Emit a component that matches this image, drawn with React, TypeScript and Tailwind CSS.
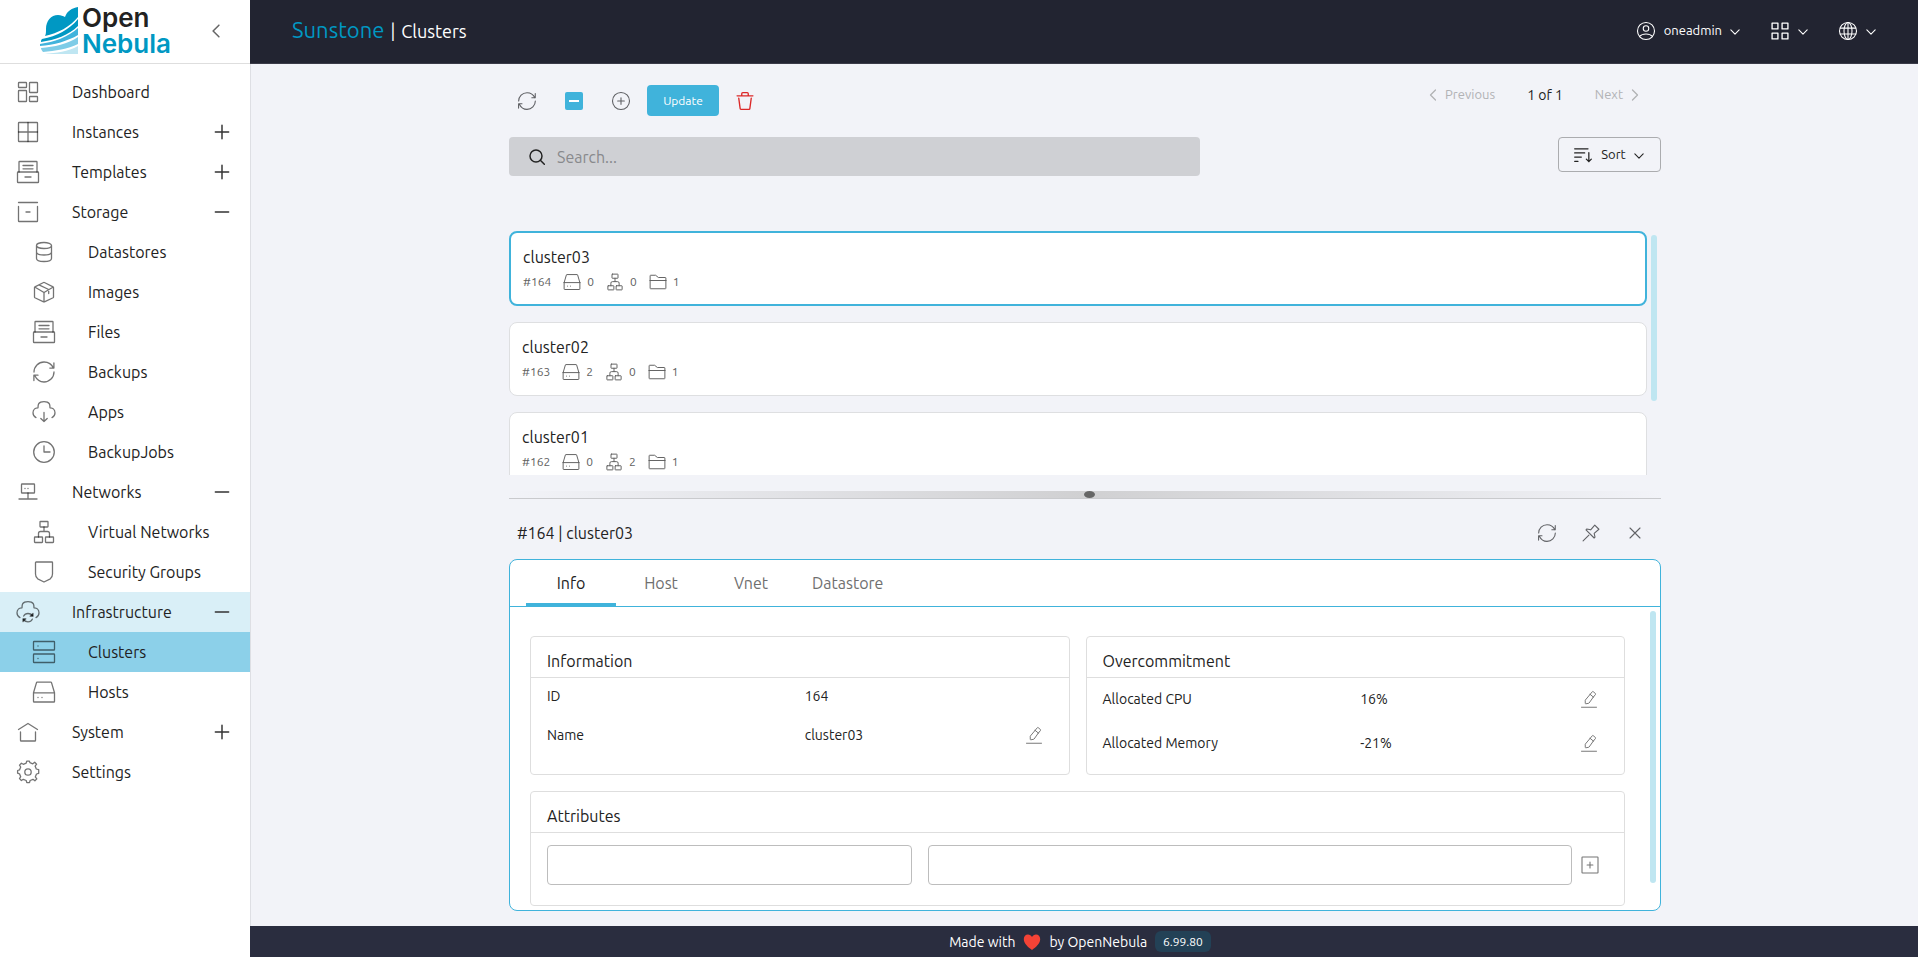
import type { ReactNode } from "react";

type IconProps = { children: ReactNode; className?: string };

function Icon({ children, className = "size-6" }: IconProps) {
    return (
        <svg
            viewBox="0 0 24 24"
            fill="none"
            stroke="currentColor"
            strokeWidth="1.3"
            strokeLinecap="round"
            strokeLinejoin="round"
            aria-hidden="true"
            className={`shrink-0 ${className}`}
        >
            {children}
        </svg>
    );
}

const paths = {
    dashboard: (
        <>
            <rect x="2.5" y="2.5" width="8" height="5" rx="0.6" />
            <rect x="2.5" y="10.5" width="8" height="11" rx="0.6" />
            <rect x="13.5" y="2.5" width="8" height="10" rx="0.6" />
            <rect x="13.5" y="16.5" width="8" height="5" rx="0.6" />
        </>
    ),
    grid: (
        <>
            <rect x="2.5" y="2.5" width="19" height="19" rx="0.6" />
            <path d="M12 2.5v19M2.5 12h19" />
        </>
    ),
    archive: (
        <>
            <path d="M3 12V2.1a.6.6 0 0 1 .6-.6h16.8a.6.6 0 0 1 .6.6V12" />
            <path d="M2.1 12h19.8a.6.6 0 0 1 .6.6v9.3a.6.6 0 0 1-.6.6H2.1a.6.6 0 0 1-.6-.6v-9.3a.6.6 0 0 1 .6-.6ZM7 5.5h10M7 8.8h10M9 17h6" />
        </>
    ),
    storage: (
        <path d="M2.5 6.5v14.4a.6.6 0 0 0 .6.6h17.8a.6.6 0 0 0 .6-.6V6.5M2.5 2.5h19M10 12h4" />
    ),
    database: (
        <path d="M4.5 5.5v13c0 1.7 3.4 3 7.5 3s7.5-1.3 7.5-3v-13M4.5 12c0 1.7 3.4 3 7.5 3s7.5-1.3 7.5-3M12 8.5c4.1 0 7.5-1.3 7.5-3s-3.4-3-7.5-3-7.5 1.3-7.5 3 3.4 3 7.5 3Z" />
    ),
    box: (
        <path d="m2.7 7 8.9 5.3c.3.15.55.15.85 0L21.3 7M12 21.5v-9.2M2.5 17.1V7.4c0-.3.15-.5.4-.6l8.7-4.3c.25-.1.5-.1.75 0l8.75 4.3c.25.1.4.3.4.6v9.7c0 .3-.15.5-.4.65l-8.7 4.1c-.25.1-.55.1-.8 0l-8.7-4.1c-.25-.15-.4-.35-.4-.65ZM7 4.8l9.7 4.7v4" />
    ),
    refresh: (
        <path d="M22 12c0 5.52-4.48 10-10 10-4 0-7.4-2.6-9.15-6.2M2 12C2 6.48 6.48 2 12 2c4.2 0 7.9 2.6 9.4 6.2M17.8 8.1h4.1V3M1.9 20.5v-5.3H6" />
    ),
    cloudDown: (
        <path d="M12 12.5v9m0 0 3.2-3M12 21.5l-3.2-3M20 17.6c1.5-.65 3-2.1 3-4.8 0-4-3.3-5-5-5C18 5 18 1.6 12 1.6S6 5 6 7.8c-1.7 0-5 1-5 5 0 2.7 1.5 4.15 3 4.8" />
    ),
    clock: (
        <>
            <circle cx="12" cy="12" r="10.3" />
            <path d="M12 6v6h6" />
        </>
    ),
    network: (
        <>
            <rect x="5.5" y="4" width="13" height="9" rx="0.6" />
            <path d="M12 13v6M3 19h18M9 8.5h.01M12 8.5h.01" />
        </>
    ),
    tree: (
        <>
            <rect x="8" y="1.5" width="8" height="5.5" rx="0.5" />
            <rect x="2.5" y="17" width="8" height="5.5" rx="0.5" />
            <rect x="13.5" y="17" width="8" height="5.5" rx="0.5" />
            <path d="M12 7v4.5M6.5 17v-3.5a2 2 0 0 1 2-2h7a2 2 0 0 1 2 2V17" />
        </>
    ),
    shield: (
        <path d="M3.5 14V2.6a.6.6 0 0 1 .6-.6h15.8a.6.6 0 0 1 .6.6V14c0 1.9-.7 3.7-2.2 4.8L12 22l-6.3-3.2C4.2 17.7 3.5 15.9 3.5 14Z" />
    ),
    cloudSync: (
        <>
            <path d="M20 17.6c1.5-.65 3-2.1 3-4.8 0-4-3.3-5-5-5C18 5 18 1.6 12 1.6S6 5 6 7.8c-1.7 0-5 1-5 5 0 2.7 1.5 4.15 3 4.8" />
            <path d="M16.5 15.5c-.9-1-2.3-2-4.5-2-2 0-3.6 1.1-4.3 2.6M7.5 19.8c.9 1 2.3 2 4.5 2 2 0 3.6-1.1 4.3-2.6" />
            <path d="M17 13.5v2.7h-2.8ZM7 21.5v-2.7h2.8Z" fill="currentColor" />
        </>
    ),
    servers: (
        <>
            <rect x="1.5" y="1.5" width="21" height="8.5" rx="0.6" />
            <rect x="1.5" y="14" width="21" height="8.5" rx="0.6" />
            <path d="M6 6h.01M6 18.5h.01" />
        </>
    ),
    drive: (
        <path d="M1.5 12.8v8.6c0 .3.25.6.6.6h19.8c.3 0 .6-.3.6-.6v-8.6M1.5 12.8l3-10.2c.05-.3.3-.5.6-.5h13.8c.3 0 .5.2.6.5l3 10.2M1.5 12.8h21M6 17.5h.01M10 17.5h.01" />
    ),
    house: <path d="m2.5 9.5 9.5-6 9.5 6M4.5 12v8.4a.6.6 0 0 0 .6.6h13.8a.6.6 0 0 0 .6-.6V12" />,
    gear: (
        <>
            <circle cx="12" cy="12" r="3.2" />
            <path
                d="m20.1 9.2-1.2-2.9 1.5-1.9-1.9-1.9-1.9 1.5-2.9-1.2-.5-1.4h-2.7l-.5 1.9-2.9 1.2-1.9-1.1-1.9 1.9 1.2 1.9-1.2 2.9-1.9.6v2.7l1.9.6 1.2 2.9-1.2 1.9 1.9 1.9 1.9-1.2 2.9 1.2.6 2.2h2.7l.6-2.2 2.9-1.2 1.9 1.5 1.9-1.9-1.5-2 1.2-2.9 2.2-.7V9.9Z"
                transform="translate(.2 -.2)"
            />
        </>
    ),
    folder: (
        <path d="M1.5 10V3.6c0-.3.3-.6.6-.6h6.7l3.7 3h9.4c.3 0 .6.3.6.6V10m-21 0v10.4c0 .3.3.6.6.6h19.8c.3 0 .6-.3.6-.6V10m-21 0h21" />
    ),
    pencil: (
        <path d="M2 23h20M13.5 5.8l2.9-3.5a.8.8 0 0 1 1.2-.1l3 2.5a.8.8 0 0 1 .1 1.2l-2.9 3.5M13.5 5.8l-6.3 7.5a.8.8 0 0 0-.2.5v3.900c0 .4.4.8.8.7l3.8-.7c.2 0 .4-.1.5-.3l5.7-8M13.5 5.8l4.3 3.6" />
    ),
    pin: <path d="m9.5 14.5-7 7M6 8.2l9.8 9.8 1-1-1-4.6 5.7-4.9-5-5-4.9 5.7-4.6-1Z" />,
};

type Item = {
    label: string;
    icon: keyof typeof paths;
    toggle?: "plus" | "minus";
    sub?: boolean;
    bg?: string;
};

const menu: Item[] = [
    { label: "Dashboard", icon: "dashboard" },
    { label: "Instances", icon: "grid", toggle: "plus" },
    { label: "Templates", icon: "archive", toggle: "plus" },
    { label: "Storage", icon: "storage", toggle: "minus" },
    { label: "Datastores", icon: "database", sub: true },
    { label: "Images", icon: "box", sub: true },
    { label: "Files", icon: "archive", sub: true },
    { label: "Backups", icon: "refresh", sub: true },
    { label: "Apps", icon: "cloudDown", sub: true },
    { label: "BackupJobs", icon: "clock", sub: true },
    { label: "Networks", icon: "network", toggle: "minus" },
    { label: "Virtual Networks", icon: "tree", sub: true },
    { label: "Security Groups", icon: "shield", sub: true },
    { label: "Infrastructure", icon: "cloudSync", toggle: "minus", bg: "bg-[#d9eff7]" },
    { label: "Clusters", icon: "servers", sub: true, bg: "bg-[#8cd0e9]" },
    { label: "Hosts", icon: "drive", sub: true },
    { label: "System", icon: "house", toggle: "plus" },
    { label: "Settings", icon: "gear" },
];

const clusters = [
    { id: 164, name: "cluster03", hosts: 0, vnets: 0, datastores: 1, selected: true },
    { id: 163, name: "cluster02", hosts: 2, vnets: 0, datastores: 1 },
    { id: 162, name: "cluster01", hosts: 0, vnets: 2, datastores: 1 },
];

function Chevron({ className = "size-[10px] translate-y-px" }: { className?: string }) {
    return (
        <Icon className={className}>
            <path d="m2 7 10 10L22 7" strokeWidth="2.6" />
        </Icon>
    );
}

function Logo() {
    return (
        <a href="#home" aria-label="OpenNebula" className="flex items-center">
            <svg viewBox="0 0 38 48" className="h-12 w-[38px] shrink-0" aria-hidden="true">
                <path
                    d="M5 29c1-2 1-4 1-7C6 14 11 8 18 8c3 0 5 1 7 2 2-6 7-9 13-10v10C30 20 18 26 5 29Z"
                    fill="#0098c3"
                />
                <path d="M2 32C17 29 29 23 38 12v7C29 28 15 33 1 35c0-1 0-2 1-3Z" fill="#0098c3" />
                <path d="M0 37c14-2 28-7 38-16v7C28 34 14 38 0 39Z" fill="#41b3dc" />
                <path d="M1 41c13-1 27-4 37-11v7c-10 5-23 7-35 8-1-1-2-3-2-4Z" fill="#7ecce7" />
                <path d="M5 46.5c11 0 23-2 33-7.5v8H13c-4 0-6 0-8-.5Z" fill="#bfe6f2" />
            </svg>
            <span className="ml-1 font-['Inter',sans-serif] text-[26px] leading-[26px] font-semibold">
                <span className="block text-[#222222]">Open</span>
                <span className="block text-[#0098c3]">Nebula</span>
            </span>
        </a>
    );
}

function Sidebar() {
    return (
        <aside className="w-[250px] shrink-0 bg-white">
            <div className="flex h-16 items-center justify-between border-b border-[#dedede] pr-[27px] pb-0.5 pl-10">
                <Logo />
                <button aria-label="Collapse menu" className="text-[#666666]">
                    <Chevron className="size-3.5 rotate-90" />
                </button>
            </div>
            <nav className="pt-2">
                {menu.map((item) => (
                    <a
                        key={item.label}
                        href={`#${item.label}`}
                        className={`flex h-10 items-center pr-5 text-base ${item.sub ? "pl-8" : "pl-4"} ${item.bg ?? ""}`}
                    >
                        <Icon className="mr-8 size-6 text-black/55">{paths[item.icon]}</Icon>
                        <span className="grow">{item.label}</span>
                        {item.toggle && (
                            <Icon className="size-4 text-[#333333]">
                                <path
                                    d={item.toggle === "plus" ? "M2 12h20M12 2v20" : "M2 12h20"}
                                    strokeWidth="2.2"
                                />
                            </Icon>
                        )}
                    </a>
                ))}
            </nav>
        </aside>
    );
}

function Header() {
    return (
        <header className="flex h-16 items-center justify-between border-b border-[#3a3b48] bg-[#222431] pr-[42px] pb-0.5 pl-[42px] text-white">
            <h1 className="flex items-baseline text-lg">
                <span className="text-[22px] text-[#0098c3]">Sunstone</span>
                <span className="mx-1.5">|</span>
                Clusters
            </h1>
            <div className="flex items-center gap-[30px] text-[13px]">
                <button className="flex items-center gap-2">
                    <Icon className="size-5">
                        <circle cx="12" cy="12" r="10.2" />
                        <circle cx="12" cy="9" r="3.3" />
                        <path d="M4.3 18.5c1.7-2 4.2-3 7.7-3s6 1 7.7 3" />
                    </Icon>
                    oneadmin
                    <Chevron />
                </button>
                <button aria-label="Views" className="flex items-center gap-2">
                    <Icon className="size-5">
                        <path
                            d="M2.5 2.5h7v7h-7ZM14.5 2.5h7v7h-7ZM2.5 14.5h7v7h-7ZM14.5 14.5h7v7h-7Z"
                            strokeWidth="1.6"
                        />
                    </Icon>
                    <Chevron />
                </button>
                <button aria-label="Zones" className="flex items-center gap-2">
                    <Icon className="size-5">
                        <circle cx="12" cy="12" r="10.2" />
                        <ellipse cx="12" cy="12" rx="4.8" ry="10.2" />
                        <path d="M12 1.8v20.4M2.6 8.5h18.8M2.6 15.5h18.8" />
                    </Icon>
                    <Chevron />
                </button>
            </div>
        </header>
    );
}

function Toolbar() {
    return (
        <div className="flex h-[73px] justify-between pt-[21px]">
            <div className="flex h-[31px] items-center pl-2 text-[#5e5f63]">
                <button aria-label="Refresh">
                    <Icon className="size-5">{paths.refresh}</Icon>
                </button>
                <button
                    aria-label="Select all"
                    className="ml-7 flex size-[18px] items-center justify-center rounded-xs bg-[#40b3db]"
                >
                    <span className="h-[2px] w-[10px] bg-white" />
                </button>
                <button aria-label="Create" className="ml-7">
                    <Icon className="size-5">
                        <circle cx="12" cy="12" r="10.2" />
                        <path d="M8 12h8M12 8v8" />
                    </Icon>
                </button>
                <button className="ml-4 h-[31px] w-[72px] rounded bg-[#40b3db] text-xs text-white">Update</button>
                <button aria-label="Delete" className="ml-4 text-[#db2828]">
                    <Icon className="size-5">
                        <path
                            d="m19.5 8.5-1.7 12.6c-.05.5-.4.9-.9.9H7.1c-.5 0-.9-.4-.9-.9L4.5 8.5M21.5 5.8h-5.6m-13.4 0h5.6m0 0V3.2c0-.7.5-1.2 1.2-1.2h5.4c.7 0 1.2.5 1.2 1.2v2.6m-7.8 0h7.8"
                            strokeWidth="1.6"
                        />
                    </Icon>
                </button>
            </div>
            <div className="flex h-5 items-center pr-5 text-[13px] text-[#b1b2b5]">
                <button disabled className="flex items-center gap-1.5">
                    <Chevron className="size-3 rotate-90" />
                    Previous
                </button>
                <span className="mx-8 text-sm text-[#222222]">1 of 1</span>
                <button disabled className="flex items-center gap-1.5">
                    Next
                    <Chevron className="size-3 -rotate-90" />
                </button>
            </div>
        </div>
    );
}

function SearchRow() {
    return (
        <div className="flex items-start justify-between">
            <label className="flex h-[39px] w-3/5 items-center gap-3 rounded bg-[#cfd0d4] pl-5">
                <Icon className="size-4 text-[#222222]">
                    <circle cx="10.5" cy="10.5" r="9" strokeWidth="2.2" />
                    <path d="m17 17 6 6" strokeWidth="2.2" />
                </Icon>
                <input
                    type="search"
                    aria-label="Search"
                    placeholder="Search..."
                    className="w-full bg-transparent text-base outline-none placeholder:text-[#88898c]"
                />
            </label>
            <button className="flex h-[35px] w-[103px] items-center justify-center gap-2 rounded border border-[#abacaf] pr-0.5 text-[13px]">
                <Icon className="size-5">
                    <path d="M2 4.5h16M2 9.5h12M2 14.5h8M2 19.5h4M19 9v11m0 0 3-3M19 20l-3-3" strokeWidth="1.5" />
                </Icon>
                Sort
                <Chevron />
            </button>
        </div>
    );
}

function ClusterCard({ cluster }: { cluster: (typeof clusters)[number] }) {
    return (
        <article
            className={`shrink-0 rounded-lg bg-white pt-3 pl-3 ${
                cluster.selected ? "h-[75px] border-2 border-[#40b3db]" : "h-[74px] border border-[#dedfe1]"
            }`}
        >
            <h2 className="text-base">{cluster.name}</h2>
            <div className="flex h-[26px] items-center text-xs text-[#616161]">
                <span>#{cluster.id}</span>
                <Icon className="mr-1.5 ml-3 size-[18px]">{paths.drive}</Icon>
                {cluster.hosts}
                <Icon className="mr-1.5 ml-3 size-[18px]">{paths.tree}</Icon>
                {cluster.vnets}
                <Icon className="mr-1.5 ml-3 size-[18px]">{paths.folder}</Icon>
                {cluster.datastores}
            </div>
        </article>
    );
}

function Card({ title, children }: { title: string; children: ReactNode }) {
    return (
        <section className="rounded border border-[#dedede] bg-white">
            <h3 className="h-[41px] border-b border-[#dedede] px-4 pt-3 text-base">{title}</h3>
            {children}
        </section>
    );
}

function Row({ label, value, editable }: { label: string; value: string; editable?: boolean }) {
    return (
        <div className="flex h-full items-center text-sm">
            <dt className="w-[52%]">{label}</dt>
            <dd className="flex grow items-center justify-between">
                {value}
                {editable && (
                    <button aria-label={`Edit ${label}`} className="text-[#757575]">
                        <Icon className="size-[18px]">{paths.pencil}</Icon>
                    </button>
                )}
            </dd>
        </div>
    );
}

function Detail() {
    return (
        <section className="mb-[15px] flex grow flex-col overflow-hidden rounded-lg border border-[#40b3db] bg-white">
            <div role="tablist" className="flex h-[47px] shrink-0 border-b border-[#40b3db] pl-4 text-base text-[#6f6f6f]">
                <button
                    role="tab"
                    aria-selected="true"
                    className="min-w-[90px] border-b-3 border-[#40b3db] px-4 pt-[3px] text-[#222222]"
                >
                    Info
                </button>
                {["Host", "Vnet", "Datastore"].map((tab) => (
                    <button key={tab} role="tab" aria-selected="false" className="min-w-[90px] px-4">
                        {tab}
                    </button>
                ))}
            </div>
            <div className="flex grow">
                <div className="flex grow flex-col gap-4 pt-[29px] pr-[25px] pl-5">
                    <div className="grid grid-cols-2 gap-4">
                        <Card title="Information">
                            <dl className="flex h-24 flex-col pr-[26px] pl-4">
                                <div className="h-9">
                                    <Row label="ID" value="164" />
                                </div>
                                <div className="h-[42px]">
                                    <Row label="Name" value="cluster03" editable />
                                </div>
                            </dl>
                        </Card>
                        <Card title="Overcommitment">
                            <dl className="flex h-24 flex-col pr-[26px] pl-4">
                                <div className="h-[42px]">
                                    <Row label="Allocated CPU" value="16%" editable />
                                </div>
                                <div className="h-[46px]">
                                    <Row label="Allocated Memory" value="-21%" editable />
                                </div>
                            </dl>
                        </Card>
                    </div>
                    <Card title="Attributes">
                        <div className="flex items-center pt-3 pr-6 pb-5 pl-4">
                            <input
                                aria-label="Attribute name"
                                className="mr-4 h-10 w-0 grow-[36] rounded border border-[#bdbdbd] px-2 text-sm"
                            />
                            <input
                                aria-label="Attribute value"
                                className="h-10 w-0 grow-[65] rounded border border-[#bdbdbd] px-2 text-sm"
                            />
                            <button aria-label="Add attribute" className="ml-2 text-[#757575]">
                                <Icon className="size-5">
                                    <rect x="2.4" y="2.4" width="19.2" height="19.2" rx="0.6" />
                                    <path d="M8.5 12h7M12 8.5v7" />
                                </Icon>
                            </button>
                        </div>
                    </Card>
                </div>
                <div className="mt-1 mr-1 mb-[27px] w-1.5 shrink-0 rounded-full bg-[#bfe6f1]" />
            </div>
        </section>
    );
}

export default function App() {
    return (
        <div className="flex min-h-screen bg-[#f2f3f8] font-['Ubuntu','Noto_Sans',sans-serif] text-[#222222]">
            <Sidebar />
            <div className="flex grow flex-col">
                <Header />
                <main className="flex grow flex-col border-l border-[#dedfe4] pl-px">
                    <div className="mx-auto flex w-full max-w-[1152px] grow flex-col">
                        <Toolbar />
                        <SearchRow />
                        <div className="mt-[55px] flex h-[244px] gap-1 overflow-hidden pr-1">
                            <div className="flex grow flex-col gap-4">
                                {clusters.map((cluster) => (
                                    <ClusterCard key={cluster.id} cluster={cluster} />
                                ))}
                            </div>
                            <div className="mt-1 h-[166px] w-1.5 shrink-0 rounded-full bg-[#bfe6f1]" />
                        </div>
                        {/* Split handle */}
                        <div className="mt-4 flex h-2 justify-center border-b border-[#c9cacd] bg-linear-to-r from-transparent via-[#d0d0d2] to-transparent pl-2">
                            <span className="h-[7px] w-[11px] rounded-[50%] bg-[#666666]" />
                        </div>
                        <div className="flex h-[60px] items-center justify-between pt-2 pr-4 pl-2">
                            <h2 className="text-base">#164 | cluster03</h2>
                            <div className="flex items-center gap-6 text-[#616266]">
                                <button aria-label="Refresh cluster">
                                    <Icon className="size-5">{paths.refresh}</Icon>
                                </button>
                                <button aria-label="Pin cluster">
                                    <Icon className="size-5">{paths.pin}</Icon>
                                </button>
                                <button aria-label="Close">
                                    <Icon className="size-5">
                                        <path d="m6 6 12 12M18 6 6 18" />
                                    </Icon>
                                </button>
                            </div>
                        </div>
                        <Detail />
                    </div>
                </main>
                <footer className="flex h-[31px] items-center justify-center bg-[#2a2d3f] pr-2 text-sm text-white">
                    Made with
                    <svg viewBox="0 0 18 16" className="mx-2 h-4 w-[18px]" role="img" aria-label="love">
                        <path
                            d="M9 16C5 13 .8 9.5.8 5 .8 2.2 2.6.4 5 .4c1.7 0 3.2.9 4 2.6.8-1.7 2.3-2.6 4-2.6 2.4 0 4.2 1.8 4.2 4.6 0 4.5-4.2 8-8.2 11Z"
                            fill="#f44336"
                        />
                    </svg>
                    by OpenNebula
                    <span className="ml-2 flex h-[21px] items-center rounded-md bg-[#234156] px-2 text-xs">6.99.80</span>
                </footer>
            </div>
        </div>
    );
}
